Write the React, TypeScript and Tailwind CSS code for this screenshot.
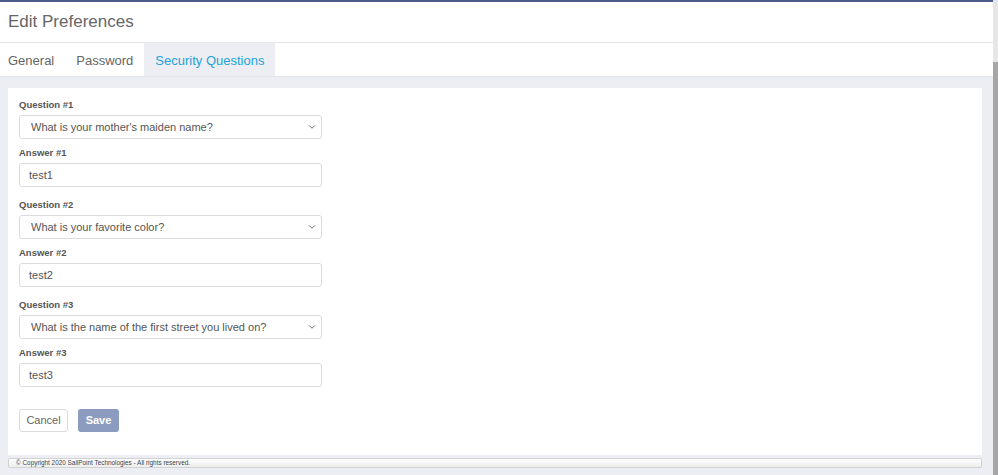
import { ChevronDown } from "lucide-react";

const questions = [
  { q: "What is your mother's maiden name?", a: "test1" },
  { q: "What is your favorite color?", a: "test2" },
  { q: "What is the name of the first street you lived on?", a: "test3" },
];

export default function App() {
  return (
    <div className="flex h-[475px] w-[998px] overflow-hidden bg-[#eceef4] font-['Liberation_Sans',Arial,sans-serif]">
      <div className="flex w-[993px] flex-col">
        <div className="h-[2px] bg-[#4b5a8c]" />
        <div className="flex h-[41px] items-center border-b border-[#e6e6e6] bg-white pl-2">
          <h1 className="text-[17px] text-[#666]">Edit Preferences</h1>
        </div>
        <div className="flex h-[34px] border-b border-[#e3e4e8] bg-white">
          <div className="flex items-center pl-2 pr-[11px] pt-[2px] text-[13px] text-[#666]">General</div>
          <div className="flex items-center px-[11px] pt-[2px] text-[13px] text-[#666]">Password</div>
          <div className="flex items-center bg-[#eceef4] px-[11px] pt-[2px] text-[13px] text-[#1fa3d4]">
            Security Questions
          </div>
        </div>
        <div className="ml-2 mr-[11px] mt-[11px] h-[367px] bg-white px-[11px] pt-[11px]">
          {questions.map((item, i) => (
            <div key={i} className={i > 0 ? "mt-[12px]" : ""}>
              <div className="h-[12px] text-[9.5px] font-bold leading-[12px] text-[#555]">
                Question #{i + 1}
              </div>
              <div className="mt-[4px] flex h-[24px] w-[303px] items-center justify-between rounded-[3px] border border-[#dcdcdc] pl-[11px] pr-[4px] text-[11px] text-[#555]">
                <span>{item.q}</span>
                <ChevronDown size={10} strokeWidth={2} className="text-[#555]" />
              </div>
              <div className="mt-[8px] h-[12px] text-[9.5px] font-bold leading-[12px] text-[#555]">
                Answer #{i + 1}
              </div>
              <div className="mt-[4px] flex h-[24px] w-[303px] items-center rounded-[3px] border border-[#dcdcdc] pl-[9px] text-[11px] text-[#555]">
                {item.a}
              </div>
            </div>
          ))}
          <div className="mt-[22px] flex gap-[10px]">
            <button className="h-[23px] w-[49px] rounded-[3px] border border-[#dcdcdc] bg-white text-[11px] text-[#666]">
              Cancel
            </button>
            <button className="h-[23px] w-[41px] rounded-[3px] bg-[#8b9cc0] text-[11px] font-bold text-white">
              Save
            </button>
          </div>
        </div>
        <div className="ml-2 mr-[11px] mt-[3px] flex h-[10px] items-center rounded-[2px] border border-[#d2d2d2] bg-gradient-to-b from-white to-[#ededed] pl-[7px] text-[6.4px] text-[#444]">
          © Copyright 2020 SailPoint Technologies - All rights reserved.
        </div>
      </div>
      <div className="flex w-[5px] flex-col">
        <div className="h-[62px] bg-[#e6e6e6]" />
        <div className="flex-1 bg-[#a6a6a6]" />
      </div>
    </div>
  );
}
